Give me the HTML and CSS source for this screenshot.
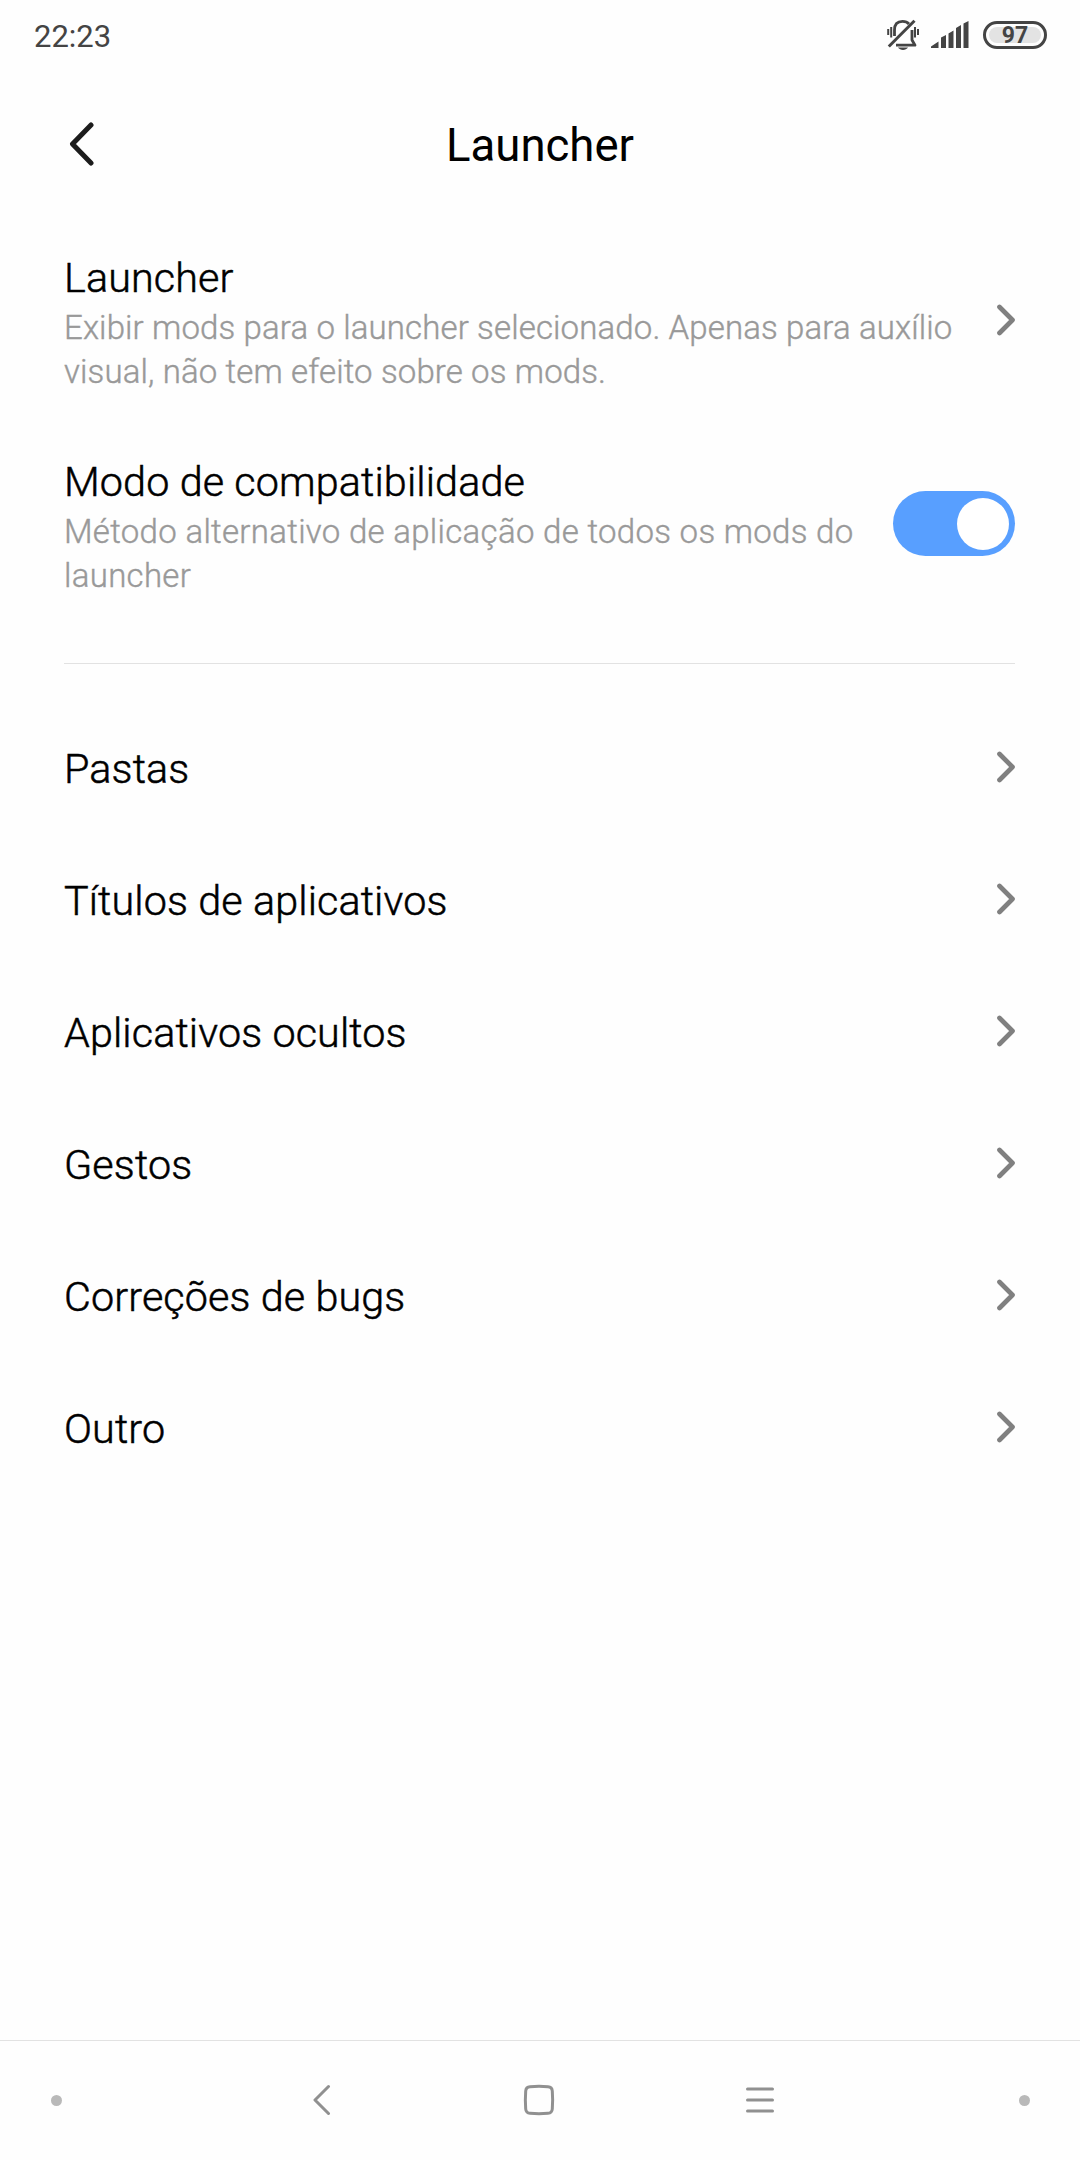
FILE: index.html
```
<!DOCTYPE html>
<html lang="pt-BR">
<head>
    <meta charset="UTF-8">
    <title>Launcher</title>
    <link rel="stylesheet" href="styles.css">
</head>
<body>
    <div class="status-bar">
        <div class="time">22:23</div>
        <div class="status-icons">
            <svg class="bell" width="32" height="32" viewBox="0 0 32 32" fill="none" stroke="#444" stroke-width="2.8">
                <path d="M7.5 17V11C7.5 5 11 2.4 15.5 2.4C18 2.4 20.5 3.2 22 5"/>
                <path d="M25 11V21L28 26.2H9" stroke-linejoin="round"/>
                <path d="M1.8 27.5L27.5 1.8" stroke-width="3"/>
                <path d="M11 28.5H21C20 30 18 31 16 31S12 30 11 28.5Z" fill="#444" stroke="none"/>
                <path d="M1.2 10V16M4.2 8V18.5M28 8V18.5M31 10V16" stroke-width="2"/>
            </svg>
            <svg class="signal" width="38" height="28" viewBox="0 0 38 28" fill="#444">
                <path d="M0 27V25.5L7.5 20.5V27ZM10 27V16.5L15 14V27ZM17.5 27V12.5L22.5 9.5V27ZM25 27V7L30 4V27ZM32.5 27V2.5L37.5 0V27Z"/>
            </svg>
            <div class="battery"><span>97</span></div>
        </div>
    </div>

    <header class="header">
        <svg class="back" width="26" height="44" viewBox="0 0 26 44">
            <path d="M23 3L4.5 22L23 41"/>
        </svg>
        <h1>Launcher</h1>
    </header>

    <main class="settings">
        <div class="row tall">
            <div class="text">
                <div class="title">Launcher</div>
                <div class="summary">Exibir mods para o launcher selecionado. Apenas para auxílio visual, não tem efeito sobre os mods.</div>
            </div>
            <svg class="chevron" viewBox="0 0 18 32"><path d="M2.5 3L15.5 16L2.5 29"/></svg>
        </div>
        <div class="row tall">
            <div class="text">
                <div class="title">Modo de compatibilidade</div>
                <div class="summary wide">Método alternativo de aplicação de todos os mods do launcher</div>
            </div>
            <div class="toggle"><div class="knob"></div></div>
        </div>

        <div class="divider"></div>

        <div class="row">
            <div class="title">Pastas</div>
            <svg class="chevron" viewBox="0 0 18 32"><path d="M2.5 3L15.5 16L2.5 29"/></svg>
        </div>
        <div class="row">
            <div class="title">Títulos de aplicativos</div>
            <svg class="chevron" viewBox="0 0 18 32"><path d="M2.5 3L15.5 16L2.5 29"/></svg>
        </div>
        <div class="row">
            <div class="title">Aplicativos ocultos</div>
            <svg class="chevron" viewBox="0 0 18 32"><path d="M2.5 3L15.5 16L2.5 29"/></svg>
        </div>
        <div class="row">
            <div class="title">Gestos</div>
            <svg class="chevron" viewBox="0 0 18 32"><path d="M2.5 3L15.5 16L2.5 29"/></svg>
        </div>
        <div class="row">
            <div class="title">Correções de bugs</div>
            <svg class="chevron" viewBox="0 0 18 32"><path d="M2.5 3L15.5 16L2.5 29"/></svg>
        </div>
        <div class="row">
            <div class="title">Outro</div>
            <svg class="chevron" viewBox="0 0 18 32"><path d="M2.5 3L15.5 16L2.5 29"/></svg>
        </div>
    </main>

    <nav class="nav-bar">
        <div class="dot"></div>
        <svg class="nav-back" width="18" height="32" viewBox="0 0 18 32"><path d="M15.5 2.5L2 16L15.5 29.5"/></svg>
        <svg class="nav-home" width="32" height="32" viewBox="0 0 32 32"><path d="M7 2.7Q16 2 25 2.7Q29 3 29.3 7Q30 16 29.3 25Q29 29 25 29.3Q16 30 7 29.3Q3 29 2.7 25Q2 16 2.7 7Q3 3 7 2.7Z"/></svg>
        <svg class="nav-menu" width="28" height="26" viewBox="0 0 28 26"><path d="M1.5 2H26.5M1.5 13H26.5M1.5 24H26.5"/></svg>
        <div class="dot"></div>
    </nav>
</body>
</html>
```
FILE: styles.css
```
* {
    box-sizing: border-box;
}

body {
    font-family: Roboto, sans-serif;
    margin: 0;
    height: 2160px;
    display: flex;
    flex-direction: column;
    background: #fefefe;
    color: #000;
}

svg {
    display: block;
    flex-shrink: 0;
}

.status-bar {
    height: 72px;
    padding: 0 33px 0 34px;
    display: flex;
    justify-content: space-between;
    align-items: center;
    color: #444;
}

.time {
    font-size: 31px;
    line-height: 36px;
    padding-top: 1px;
}

.status-icons {
    display: flex;
    align-items: center;
    height: 72px;
    padding-bottom: 3px;
}

.signal {
    margin: 0 14px 0 12px;
}

.battery {
    width: 64px;
    height: 28px;
    padding: 3px;
    border: 3px solid #444;
    border-radius: 14px;
    display: flex;
}

.battery span {
    flex: 1;
    background: #e3e3e3;
    border-radius: 9px;
    font-size: 23px;
    font-weight: 700;
    line-height: 17px;
    text-align: center;
}

.header {
    height: 146px;
    padding: 0 68px;
    display: grid;
    grid-template-columns: 26px 1fr 26px;
    align-items: center;
}

.header h1 {
    font-size: 45.5px;
    font-weight: 400;
    line-height: 54px;
    margin: 2px 0 0;
    text-align: center;
}

.back {
    margin-bottom: 2px;
    fill: none;
    stroke: #1c1c1c;
    stroke-width: 5;
    stroke-linecap: round;
    stroke-linejoin: round;
}

.settings {
    flex: 1;
    padding: 0 65px 0 64px;
}

.row {
    height: 132px;
    display: flex;
    justify-content: space-between;
    align-items: center;
}

.row.tall {
    height: 204px;
}

.text {
    padding-top: 6px;
    max-width: 900px;
}

.title {
    font-size: 41.3px;
    font-weight: 300;
    line-height: 48px;
    letter-spacing: 0.12px;
    padding-top: 3px;
    -webkit-text-stroke: 0.5px #000;
}

.text .title {
    padding-top: 2px;
}

.summary {
    font-size: 33px;
    font-weight: 300;
    line-height: 44px;
    letter-spacing: 0.13px;
    color: #999;
    margin-top: 4px;
    -webkit-text-stroke: 0.4px #999;
}

.summary.wide {
    letter-spacing: 0.3px;
}

.chevron {
    width: 18px;
    height: 32px;
    fill: none;
    stroke: #808080;
    stroke-width: 4.7;
    stroke-linecap: round;
    stroke-linejoin: round;
}

.toggle {
    width: 122px;
    height: 65px;
    margin: 0 0 1px 36px;
    padding-right: 6px;
    flex-shrink: 0;
    background: #589fff;
    border-radius: 33px;
    display: flex;
    justify-content: flex-end;
    align-items: center;
}

.knob {
    width: 52px;
    height: 52px;
    background: #fff;
    border-radius: 50%;
}

.divider {
    height: 1px;
    margin: 37px 0;
    background: #e2e2e2;
}

.nav-bar {
    height: 120px;
    padding-bottom: 1px;
    border-top: 1px solid #e2e2e2;
    display: grid;
    grid-template-columns: 112px 100px 220px 214px 228px 94px 112px;
    align-items: center;
    justify-items: center;
    fill: none;
    stroke: #909090;
    stroke-width: 3;
    stroke-linecap: round;
    stroke-linejoin: round;
}

.nav-back {
    grid-column: 3;
}

.dot {
    width: 11px;
    height: 11px;
    background: #b9b9b9;
    border-radius: 50%;
}

.dot:last-child {
    grid-column: 7;
}
```
